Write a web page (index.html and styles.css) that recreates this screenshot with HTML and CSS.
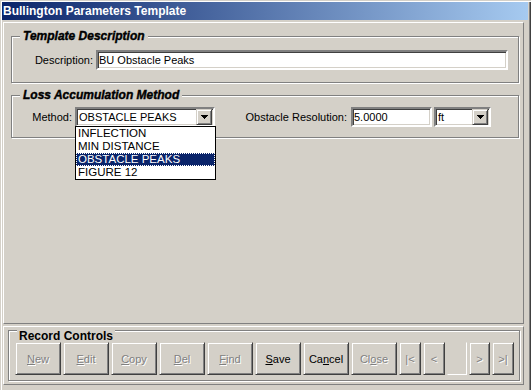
FILE: index.html
```html
<!DOCTYPE html>
<html lang="en">
<head>
    <meta charset="UTF-8">
    <title>Bullington Parameters Template</title>
    <link rel="stylesheet" href="styles.css">
</head>
<body>

<div class="window">
    <div class="titlebar">Bullington Parameters Template</div>

    <div class="panel panel-main">
        <div class="group group-desc">
            <div class="group-title">Template Description</div>
            <div class="row">
                <label class="lbl lbl-desc" for="description">Description:</label>
                <input type="text" class="textbox tb-desc" id="description" value="BU Obstacle Peaks">
            </div>
        </div>

        <div class="group group-loss">
            <div class="group-title">Loss Accumulation Method</div>
            <div class="row">
                <span class="lbl lbl-method">Method:</span>
                <div class="combo combo-method">
                    <span class="combo-text">OBSTACLE PEAKS</span>
                    <span class="combo-btn">
                        <svg width="7" height="4" viewBox="0 0 7 4"><path d="M0 0h7v1h-1v1h-1v1h-1v1h-1v-1h-1v-1h-1v-1h-1z" fill="#000"/></svg>
                    </span>
                    <ul class="combo-list">
                        <li>INFLECTION</li>
                        <li>MIN DISTANCE</li>
                        <li class="selected">OBSTACLE PEAKS</li>
                        <li>FIGURE 12</li>
                    </ul>
                </div>
                <label class="lbl lbl-res" for="resolution">Obstacle Resolution:</label>
                <input type="text" class="textbox tb-res" id="resolution" value="5.0000">
                <div class="combo combo-units">
                    <span class="combo-text">ft</span>
                    <span class="combo-btn">
                        <svg width="7" height="4" viewBox="0 0 7 4"><path d="M0 0h7v1h-1v1h-1v1h-1v1h-1v-1h-1v-1h-1v-1h-1z" fill="#000"/></svg>
                    </span>
                </div>
            </div>
        </div>
    </div>

    <div class="panel panel-records">
        <div class="group group-records">
            <div class="group-title">Record Controls</div>
            <div class="buttons">
                <button class="btn" disabled><u>N</u>ew</button>
                <button class="btn" disabled><u>E</u>dit</button>
                <button class="btn" disabled><u>C</u>opy</button>
                <button class="btn" disabled><u>D</u>el</button>
                <button class="btn" disabled><u>F</u>ind</button>
                <button class="btn"><u>S</u>ave</button>
                <button class="btn">Ca<u>n</u>cel</button>
                <button class="btn" disabled>Cl<u>o</u>se</button>
                <button class="btn btn-nav" disabled>|&lt;</button>
                <button class="btn btn-nav" disabled>&lt;</button>
                <div class="record-pos"></div>
                <button class="btn btn-nav btn-next" disabled>&gt;</button>
                <button class="btn btn-nav" disabled>&gt;|</button>
            </div>
        </div>
    </div>
</div>

</body>
</html>
```

FILE: styles.css
```css
* {
    box-sizing: border-box;
}

body {
    margin: 0;
    background-color: #d4d0c8;
    font-family: 'Liberation Sans', Arial, sans-serif;
    font-size: 11px;
    color: #000;
    overflow: hidden;
}

.window {
    width: 531px;
    height: 390px;
    padding: 2px 3px 0 2px;
    box-shadow: inset 1px 1px 0 #d4d0c8, inset 2px 2px 0 #fff,
                inset -1px 0 0 #404040, inset -2px 0 0 #808080;
}

.titlebar {
    height: 18px;
    line-height: 18px;
    padding-left: 1px;
    background: linear-gradient(to right, #0a246a, #a6caf0);
    color: #fff;
    font-size: 12px;
    font-weight: bold;
    white-space: nowrap;
}

/* Raised panels */
.panel {
    margin: 0 4px 0 1px;
    border: 1px solid;
    border-color: #fff #808080 #808080 #fff;
}

.panel-main {
    margin-top: 2px;
    height: 302px;
    padding: 13px 4px 0 7px;
}

.panel-records {
    margin-top: 2px;
    height: 59px;
    padding: 3px 3px 0 4px;
}

/* Etched group boxes */
.group {
    border: 1px solid #808080;
    box-shadow: inset 1px 1px 0 #fff, 1px 1px 0 #fff;
}

.group-title {
    display: table;
    margin: -8px 0 0 8px;
    padding: 0 3px;
    line-height: 14px;
    font-size: 12px;
    font-weight: bold;
    font-style: italic;
    -webkit-text-stroke: 0.4px #000;
    background-color: #d4d0c8;
}

.group-desc {
    padding-bottom: 12px;
}

.group-loss {
    margin-top: 12px;
    padding-bottom: 10px;
}

.group-desc .row {
    margin-top: 7px;
}

.group-loss .row {
    margin-top: 5px;
}

.group-records {
    padding: 0 0 5px 6px;
}

.group-records .group-title {
    margin: -1px 0 0 2px;
    padding: 0 2px;
    line-height: 12px;
    font-style: normal;
    -webkit-text-stroke: 0;
}

.row {
    display: flex;
    align-items: center;
}

.lbl {
    text-align: right;
    white-space: nowrap;
}

.lbl-desc {
    width: 81px;
    margin-right: 3px;
}

.lbl-method {
    width: 60px;
    margin-right: 3px;
}

.lbl-res {
    width: 132px;
    margin-right: 4px;
}

/* Sunken edit fields */
.textbox,
.combo {
    height: 20px;
    border: 2px solid;
    border-color: #808080 #fff #fff #808080;
    box-shadow: inset 1px 1px 0 #404040, inset -1px -1px 0 #d4d0c8;
    background-color: #fff;
    font-family: inherit;
    font-size: 11px;
    color: #000;
}

.textbox {
    margin: 0;
    padding: 0 1px;
    outline: none;
}

.tb-desc {
    width: 412px;
}

.tb-res {
    width: 81px;
}

.combo {
    position: relative;
    display: flex;
    align-items: center;
    padding-right: 1px;
}

.combo-method {
    width: 140px;
}

.combo-units {
    width: 57px;
    margin-left: 2px;
}

.combo-text {
    flex: 1;
    padding-left: 2px;
    white-space: nowrap;
}

.combo-btn {
    width: 16px;
    height: 16px;
    display: flex;
    align-items: center;
    justify-content: center;
    background-color: #d4d0c8;
    border: 1px solid;
    border-color: #d4d0c8 #404040 #404040 #d4d0c8;
    box-shadow: inset 1px 1px 0 #fff, inset -1px -1px 0 #808080;
}

/* Open drop-down list */
.combo-list {
    position: absolute;
    top: 17px;
    left: -2px;
    width: 141px;
    margin: 0;
    padding: 0;
    list-style: none;
    background-color: #fff;
    border: 1px solid #000;
    z-index: 2;
}

.combo-list li {
    height: 13px;
    line-height: 13px;
    padding-left: 2px;
    font-size: 11.5px;
}

.combo-list .selected {
    background-color: #0a246a;
    color: #fff;
    outline: 1px dotted #fff;
    outline-offset: -1px;
}

/* Record buttons */
.buttons {
    display: flex;
    gap: 2px;
}

.btn {
    width: 46px;
    height: 33px;
    padding: 0;
    background-color: #d4d0c8;
    border: 1px solid;
    border-color: #d4d0c8 #404040 #404040 #d4d0c8;
    box-shadow: inset 1px 1px 0 #fff, inset -1px -1px 0 #808080;
    font-family: inherit;
    font-size: 11px;
    font-weight: normal;
    color: #000;
}

.btn:disabled {
    color: #808080;
    text-shadow: 1px 1px 0 #fff;
}

.btn-nav {
    width: 22px;
}

.btn-next {
    width: 21px;
}

.record-pos {
    width: 20px;
    height: 33px;
    border: 1px solid;
    border-color: #d4d0c8 #fff #fff #d4d0c8;
}
```
